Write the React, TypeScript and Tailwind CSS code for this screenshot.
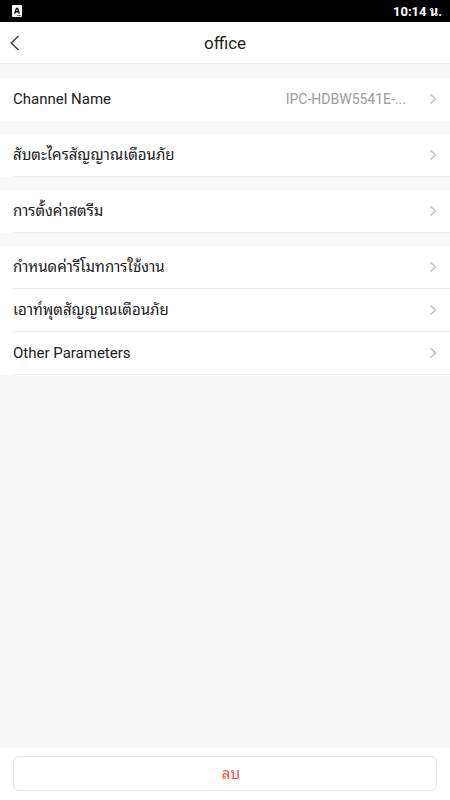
import React from "react";

type Setting = { label: string; value?: string };

const groups: Setting[][] = [
  [{ label: "Channel Name", value: "IPC-HDBW5541E-..." }],
  [{ label: "สับตะไครสัญญาณเตือนภัย" }],
  [{ label: "การตั้งค่าสตรีม" }],
  [
    { label: "กำหนดค่ารีโมทการใช้งาน" },
    { label: "เอาท์พุตสัญญาณเตือนภัย" },
    { label: "Other Parameters" },
  ],
];

function StatusBar() {
  return (
    <div className="flex h-[22px] shrink-0 items-center justify-between bg-black pr-2 pl-3 text-white">
      <svg width="10" height="12" viewBox="0 0 10 12" aria-hidden="true">
        <rect width="10" height="12" rx="1" fill="#fff" />
        <path d="M2.7 8.5 4.4 3.5h1.2l1.7 5M3.5 6.8h3" fill="none" stroke="#111" strokeWidth="1.4" />
        <path d="M5 10.5h4" stroke="#777" strokeWidth="1" />
      </svg>
      <span className="pt-0.5 text-[13px] leading-5 font-bold">10:14 น.</span>
    </div>
  );
}

function Row({ label, value }: Setting) {
  return (
    <li>
      <button type="button" className="flex h-[43px] w-full bg-white pl-[13px] text-left">
        <span
          className={
            "flex h-full min-w-0 flex-1 items-center justify-between border-b pr-3 text-[15px] leading-5 " +
            (value ? "border-white" : "border-[#ededed]")
          }
        >
          <span className="text-[#202020]">{label}</span>
          <span className="flex items-center gap-[22px]">
            {value && <span className="text-sm whitespace-nowrap text-[#9b9b9b]">{value}</span>}
            <svg width="10" height="12" viewBox="0 0 10 12" fill="none" aria-hidden="true">
              <path d="m2.5 1.5 5 4.5-5 4.5" stroke="#bdbdbd" strokeWidth="1.5" />
            </svg>
          </span>
        </span>
      </button>
    </li>
  );
}

export default function App() {
  return (
    <div className="flex min-h-screen flex-col bg-[#f8f8f8] font-[Roboto,'Noto_Sans_Thai_Looped','Loma','Waree','Garuda','Noto_Sans',sans-serif]">
      <StatusBar />
      <header className="grid h-[42px] grid-cols-[40px_1fr_40px] items-center border-b border-[#e9e9e9] bg-white">
        <button type="button" aria-label="Back" className="flex h-full items-center pl-[10px]">
          <svg width="10" height="16" viewBox="0 0 10 16" fill="none" aria-hidden="true">
            <path d="M8.5 1 1.2 8l7.3 7" stroke="#333" strokeWidth="1.3" />
          </svg>
        </button>
        <h1 className="text-center text-[17px] leading-6 text-[#1c1c1c]">office</h1>
      </header>
      <main className="flex flex-1 flex-col gap-[13px] py-3.5">
        {groups.map((rows) => (
          <ul key={rows[0].label}>
            {rows.map((row) => (
              <Row key={row.label} {...row} />
            ))}
          </ul>
        ))}
      </main>
      <footer className="bg-white px-[13px] pt-2 pb-[9px]">
        <button
          type="button"
          className="h-[35px] w-full rounded-md border border-[#e6e6e6] bg-white pl-3 text-[15px] leading-5 text-[#f4513f]"
        >
          ลบ
        </button>
      </footer>
    </div>
  );
}
